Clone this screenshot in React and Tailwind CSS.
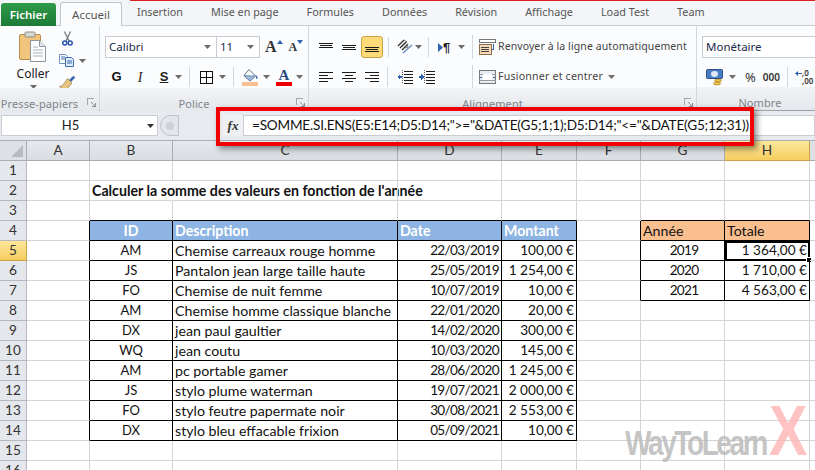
import React from "react";

const Caret = ({ c = "#6b6b6b", w = 7 }) => (
  <svg width={w} height="4" viewBox="0 0 7 4" className="shrink-0"><path d="M0 0h7L3.5 4z" fill={c} /></svg>
);

const Sep = ({ h = "h-[20px]" }) => <div className={`w-px ${h} bg-[#d4d7dc] shrink-0`} />;

const Lines = ({ rows, w = 15, h = 13 }) => (
  <svg width={w} height={h} viewBox={`0 0 ${w} ${h}`} className="shrink-0" shapeRendering="crispEdges">
    {rows.map(([a, b, y], i) => (
      <rect key={i} x={a} y={y} width={b - a} height="1" fill="#1a1a1a" />
    ))}
  </svg>
);

const Launcher = () => (
  <svg width="9" height="9" viewBox="0 0 9 9" className="shrink-0" shapeRendering="crispEdges">
    <path d="M0.5 7V0.5H7" fill="none" stroke="#a2a6ab" />
    <path d="M4 4l4 4M8 5v3H5" fill="none" stroke="#8b8f94" />
  </svg>
);

const Paste = () => (
  <svg width="28" height="31" viewBox="0 0 28 31" className="shrink-0">
    <rect x="0.5" y="3.5" width="21" height="25" rx="1.5" fill="#f2c57c" stroke="#b98d4c" />
    <rect x="6" y="1" width="10" height="5" rx="1" fill="#d8d8d2" stroke="#8d8d85" />
    <path d="M11.5 9.5h9l6 6v15h-15z" fill="#fff" stroke="#8f9499" />
    <path d="M20.5 9.5v6h6" fill="#e5e8ec" stroke="#8f9499" />
    <path d="M14 16h5M14 19h10M14 22h10M14 25h10" stroke="#a9afb6" />
  </svg>
);

const Scissors = () => (
  <svg width="11" height="15" viewBox="0 0 11 15" className="shrink-0">
    <path d="M2.5 0.5L7 10M8.5 0.5L4 10" stroke="#7a8088" strokeWidth="1.4" fill="none" />
    <circle cx="2.8" cy="12" r="2" fill="none" stroke="#2b55a8" strokeWidth="1.5" />
    <circle cx="8.2" cy="12" r="2" fill="none" stroke="#2b55a8" strokeWidth="1.5" />
  </svg>
);

const Copy = () => (
  <svg width="15" height="13" viewBox="0 0 15 13" className="shrink-0">
    <path d="M0.5 0.5h6l2 2v7h-8z" fill="#fff" stroke="#6c8fc0" />
    <path d="M6.5 3.5h6l2 2v7h-8z" fill="#dfeafa" stroke="#3f6cab" />
    <path d="M2 3h4M2 5h4M8 7h5M8 9h5" stroke="#3f6cab" />
  </svg>
);

const Brush = () => (
  <svg width="17" height="15" viewBox="0 0 17 15" className="shrink-0">
    <path d="M10 5L14.5 0.7L16.2 2.4L12 7z" fill="#3a66b0" />
    <path d="M8.5 3.5L13 8L8 14C5 14 2 13.5 0.5 11.5C3 11.5 5 9 8.5 3.5z" fill="#e5c57f" stroke="#8e7a4c" strokeWidth="0.7" />
  </svg>
);

const Fill = () => (
  <svg width="17" height="18" viewBox="0 0 17 18" className="shrink-0">
    <path d="M7 1.5L13.5 8L8 13L2 7.5z" fill="#fff" stroke="#5b6d85" />
    <path d="M2 7.5L13.5 8L8 13z" fill="#9db9dc" stroke="#4d6f9e" strokeWidth="0.6" />
    <path d="M14 7c1.5 1.6 2 3 1.2 3.8S13.6 10 14 7z" fill="#3a66b0" />
    <rect x="0" y="14" width="16" height="4" fill="#f8c090" />
  </svg>
);

const Borders = () => (
  <svg width="13" height="13" viewBox="0 0 13 13" className="shrink-0" shapeRendering="crispEdges">
    <path d="M0.5 0.5h12v12h-12zM6.5 0.5v12M0.5 6.5h12" fill="none" stroke="#111" />
  </svg>
);

const Orient = () => (
  <svg width="17" height="16" viewBox="0 0 17 16" className="shrink-0">
    <path d="M1 7L7 1M3 9L9 3M5 11L11 5" stroke="#333" strokeWidth="1.3" />
    <path d="M7 1l3 2-5 5M10 5l1 3-3 1" stroke="#777" fill="none" />
    <path d="M6 14L15 6" stroke="#5a7fb5" strokeWidth="1.2" />
  </svg>
);

const Pilcrow = () => (
  <div className="flex items-center shrink-0 w-[15px]">
    <svg width="5" height="9" viewBox="0 0 5 9"><path d="M0 0l5 4.5L0 9z" fill="#2f62ad" /></svg>
    <span className="font-['Liberation_Sans'] text-[13px] leading-none text-[#222] font-bold">¶</span>
  </div>
);

const Indent = ({ rev }) => (
  <svg width="16" height="14" viewBox="0 0 16 14" className="shrink-0" shapeRendering="crispEdges">
    <path d="M7 1h9M7 4h9M7 7h9M7 10h9M7 13h9" stroke="#1a1a1a" />
    <path d="M5.5 0v14" stroke="#555" strokeDasharray="1 1" />
    {rev ? <path d="M0 6h2V4l3 3-3 3V8H0z" fill="#2f62ad" /> : <path d="M5 6H3V4L0 7l3 3V8h2z" fill="#2f62ad" />}
  </svg>
);

const Wrap = () => (
  <svg width="17" height="16" viewBox="0 0 17 16" className="shrink-0" shapeRendering="crispEdges">
    <rect x="0.5" y="0.5" width="16" height="3" fill="#fff" stroke="#777" />
    <rect x="0.5" y="5.5" width="12" height="9.5" fill="#f7d9b7" stroke="#8a6d4e" />
    <path d="M2 8h8M2 10h8M2 12h8" stroke="#444" />
    <path d="M14.5 5v5H13" stroke="#2f62ad" fill="none" />
  </svg>
);

const Merge = () => (
  <svg width="17" height="14" viewBox="0 0 17 14" className="shrink-0" shapeRendering="crispEdges">
    <rect x="0.5" y="0.5" width="16" height="13" fill="#e8edf3" stroke="#777" />
    <path d="M0 4h17M0 10h17" stroke="#999" />
    <rect x="4" y="4" width="9" height="6" fill="#fff" />
    <path d="M1 7h2M14 7h2" stroke="#2f62ad" />
  </svg>
);

const Currency = () => (
  <svg width="17" height="17" viewBox="0 0 17 17" className="shrink-0">
    <rect x="0.5" y="0.5" width="16" height="9" rx="1" fill="#4a7cc4" stroke="#2d4f85" />
    <ellipse cx="8.5" cy="5" rx="3.5" ry="3" fill="#dfe9f7" />
    <ellipse cx="12" cy="11.5" rx="3.5" ry="1.5" fill="#f0c04a" stroke="#9a7518" strokeWidth="0.6" />
    <ellipse cx="11" cy="14.5" rx="3.5" ry="1.5" fill="#f0c04a" stroke="#9a7518" strokeWidth="0.6" />
  </svg>
);

const tabs = ["Insertion", "Mise en page", "Formules", "Données", "Révision", "Affichage", "Load Test", "Team"];

const Group = ({ className, label, launcher = true, children }) => (
  <div className={`flex flex-col h-full shrink-0 border-r border-[#d3d6da] ${className}`}>
    <div className="h-[62px] bg-[#fbfcfd] relative">{children}</div>
    <div className="h-[23px] flex justify-center pr-[20px] pt-[8px] relative bg-gradient-to-b from-[#f1f3f6] to-[#e5e8ec] text-[#7f848a] text-[11px] leading-[15px] tracking-[0.1px]">
      <span>{label}</span>
      {launcher && (
        <span className="absolute right-[3px] top-[10px]">
          <Launcher />
        </span>
      )}
    </div>
  </div>
);

const widths = [27, 63, 83, 225, 104, 75, 64, 84, 85, 6];
const letters = ["A", "B", "C", "D", "E", "F", "G", "H"];

const data = [
  ["AM", "Chemise carreaux rouge homme", "22/03/2019", "100,00 €"],
  ["JS", "Pantalon jean large taille haute", "25/05/2019", "1 254,00 €"],
  ["FO", "Chemise de nuit femme", "10/07/2019", "10,00 €"],
  ["AM", "Chemise homme classique blanche", "22/01/2020", "20,00 €"],
  ["DX", "jean paul gaultier", "14/02/2020", "300,00 €"],
  ["WQ", "jean coutu", "10/03/2020", "145,00 €"],
  ["AM", "pc portable gamer", "28/06/2020", "1 245,00 €"],
  ["JS", "stylo plume waterman", "19/07/2021", "2 000,00 €"],
  ["FO", "stylo feutre papermate noir", "30/08/2021", "2 553,00 €"],
  ["DX", "stylo bleu effacable frixion", "05/09/2021", "10,00 €"],
];
const totals = [
  ["2019", "1 364,00 €"],
  ["2020", "1 710,00 €"],
  ["2021", "4 563,00 €"],
];

function cellFor(row, col) {
  // col 1..9 = A..I
  let text = null;
  let cls = "";
  let align = "text-left";
  let rb = false, bb = false, hideR = false;
  const inMain = col >= 2 && col <= 5 && row >= 4 && row <= 14;
  const inSide = col >= 7 && col <= 8 && row >= 4 && row <= 7;
  if (inMain || inSide) { rb = true; bb = true; }
  if (row >= 4 && row <= 14 && col === 1) rb = true;
  if (row >= 4 && row <= 7 && col === 6) rb = true;
  if (row === 3 && col >= 2 && col <= 5) bb = true;
  if (row === 3 && col >= 7 && col <= 8) bb = true;
  if (row === 2 && col === 2) {
    text = "Calculer la somme des valeurs en fonction de l'année";
    cls = "font-bold text-[14.2px] text-[#111]";
    hideR = true;
  }
  if (row === 4 && inMain) {
    text = ["ID", "Description", "Date", "Montant"][col - 2];
    cls = "bg-[#8db4e2] text-white text-[14.2px] font-bold";
    align = col === 2 ? "text-center" : "text-left";
  }
  if (row === 4 && inSide) {
    text = col === 7 ? "Année" : "Totale";
    cls = "bg-[#fabf8f] text-[14.2px] text-[#111]";
  }
  if (row >= 5 && inMain) {
    text = data[row - 5][col - 2];
    align = col === 2 ? "text-center" : col === 3 ? "text-left" : "text-right";
    if (col === 3) cls = "text-[14.2px]";
    if (col === 4) cls = "tracking-[-0.65px]";
    if (col === 2) cls = "text-[13px]";
  }
  if (row >= 5 && inSide) {
    text = totals[row - 5][col - 7];
    align = col === 7 ? "text-center" : "text-right";
    if (col === 7) cls = "tracking-[-0.7px] pl-[5px]";
  }
  return { text, cls, align, rb, bb, hideR };
}

export default function App() {
  return (
    <div className="relative w-[815px] h-[470px] overflow-hidden bg-white font-['Noto_Sans',sans-serif] text-[#3b3b3b]">
      {/* Tab strip */}
      <div className="relative h-[26px] bg-[#f3f5f8] border-b border-[#c9ccd1] flex items-end">
        <div className="ml-[1px] mb-[-1px] w-[55px] h-[23px] rounded-t-[3px] bg-gradient-to-b from-[#2f9a48] to-[#1d7a37] text-white text-[11.5px] font-semibold flex items-center justify-center">
          Fichier
        </div>
        <div className="ml-[4px] mb-[-1px] w-[62px] h-[24px] rounded-t-[3px] bg-[#fbfcfd] border border-b-0 border-[#c3c6cb] text-[11.5px] text-[#555] flex items-center justify-center">
          Accueil
        </div>
        <div className="ml-[15px] h-[25px] flex items-center gap-[28px] text-[10.8px] text-[#555] whitespace-nowrap">
          {tabs.map((t) => (
            <span key={t}>{t}</span>
          ))}
        </div>
        <div className="absolute left-[130px] right-0 top-0 h-px bg-[#d92020]" />
      </div>

      {/* Ribbon */}
      <div className="flex h-[85px] border-b border-[#9ea2a7] text-[11.5px] text-[#333]">
        <Group className="w-[100px]" label="Presse-papiers">
          <div className="flex h-full">
            <div className="w-[57px] flex flex-col items-center pt-[5px] pl-[9px]">
              <Paste />
              <span className="mt-[5px] text-[12px] leading-[14px] text-[#222]">Coller</span>
              <div className="mt-[4px]"><Caret /></div>
            </div>
            <div className="flex flex-col gap-[8px] pt-[5px] pl-[2px]">
              <div className="pl-[3px]"><Scissors /></div>
              <div className="flex items-center gap-[5px]"><Copy /><Caret /></div>
              <Brush />
            </div>
          </div>
        </Group>

        <Group className="w-[209px]" label="Police">
          <div className="flex flex-col pl-[5px] pt-[10px]">
            <div className="flex items-center h-[22px]">
              <div className="w-[112px] h-[22px] bg-white border border-[#c9ccd1] flex items-center justify-between pl-[3px] pr-[5px] text-[#1b2a4a]">
                Calibri <Caret />
              </div>
              <div className="w-[43px] h-[22px] bg-white border border-l-0 border-[#c9ccd1] flex items-center justify-between pl-[3px] pr-[5px] text-[#1b2a4a]">
                11 <Caret />
              </div>
              <span className="ml-[5px] font-['Liberation_Serif'] font-bold text-[16px] text-[#333] leading-none">A</span>
              <svg width="6" height="4" viewBox="0 0 6 4" className="mb-[10px]"><path d="M0 4l3-4 3 4z" fill="#2f62ad" /></svg>
              <span className="ml-[6px] font-['Liberation_Serif'] font-bold text-[12px] text-[#333] leading-none">A</span>
              <svg width="6" height="4" viewBox="0 0 6 4" className="mb-[10px]"><path d="M0 0l3 4 3-4z" fill="#2f62ad" /></svg>
            </div>
            <div className="flex items-center h-[22px] mt-[8px]">
              <span className="ml-[4px] w-[15px] text-center font-['Liberation_Sans'] font-bold text-[13px] text-[#111]">G</span>
              <span className="ml-[11px] w-[10px] text-center font-['Liberation_Serif'] italic text-[14px] text-[#222]">I</span>
              <span className="ml-[14px] w-[10px] text-center font-['Liberation_Sans'] font-bold underline text-[13px] text-[#222]">S</span>
              <div className="ml-[6px]"><Caret /></div>
              <div className="ml-[7px]"><Sep /></div>
              <div className="ml-[10px]"><Borders /></div>
              <div className="ml-[6px]"><Caret /></div>
              <div className="ml-[7px]"><Sep /></div>
              <div className="ml-[8px]"><Fill /></div>
              <div className="ml-[4px]"><Caret /></div>
              <div className="ml-[6px] flex flex-col items-center">
                <span className="font-['Liberation_Serif'] font-bold text-[15px] leading-[13px] text-[#2a4b80]">A</span>
                <div className="w-[16px] h-[4px] bg-[#ee0000]" />
              </div>
              <div className="ml-[4px]"><Caret /></div>
            </div>
          </div>
        </Group>

        <Group className="w-[388px]" label="Alignement">
          <div className="flex flex-col pl-[10px] pt-[10px]">
            <div className="flex items-center h-[22px]">
              <Lines rows={[[0, 14, 2], [1, 13, 4], [0, 14, 6]]} />
              <div className="ml-[8px]"><Lines rows={[[0, 14, 4], [1, 13, 6], [0, 14, 8]]} /></div>
              <div className="ml-[4px] w-[22px] h-[22px] rounded-[3px] bg-[#fcdb78] border border-[#c9a24a] flex items-center justify-center">
                <Lines rows={[[0, 14, 6], [1, 13, 8], [0, 14, 10]]} />
              </div>
              <div className="ml-[5px]"><Sep /></div>
              <div className="ml-[8px]"><Orient /></div>
              <div className="ml-[1px]"><Caret /></div>
              <div className="ml-[6px]"><Sep /></div>
              <div className="ml-[9px]"><Pilcrow /></div>
              <div className="ml-[5px]"><Caret /></div>
              <div className="ml-[7px]"><Sep h="h-[24px]" /></div>
              <div className="ml-[6px]"><Wrap /></div>
              <span className="ml-[2px] text-[10.5px] tracking-[0.1px] text-[#444] whitespace-nowrap">Renvoyer à la ligne automatiquement</span>
            </div>
            <div className="flex items-center h-[22px] mt-[8px]">
              <Lines rows={[[0, 14, 1], [0, 9, 4], [0, 14, 7], [0, 9, 10]]} />
              <div className="ml-[8px]"><Lines rows={[[0, 14, 1], [3, 11, 4], [0, 14, 7], [3, 11, 10]]} /></div>
              <div className="ml-[8px]"><Lines rows={[[0, 14, 1], [5, 14, 4], [0, 14, 7], [5, 14, 10]]} /></div>
              <div className="ml-[7px]"><Sep /></div>
              <div className="ml-[9px]"><Indent /></div>
              <div className="ml-[6px]"><Indent rev /></div>
              <div className="ml-[37px]"><Sep h="h-[24px]" /></div>
              <div className="ml-[6px]"><Merge /></div>
              <span className="ml-[2px] text-[10.6px] tracking-[0.2px] text-[#444] whitespace-nowrap">Fusionner et centrer</span>
              <div className="ml-[5px]"><Caret /></div>
            </div>
          </div>
        </Group>

        <div className="flex flex-col h-full flex-1 min-w-0">
          <div className="h-[62px] bg-[#fbfcfd] pl-[5px] pt-[10px] overflow-hidden">
            <div className="h-[22px] w-[130px] bg-white border border-[#c9ccd1] flex items-center pl-[3px] text-[#1b2a4a]">Monétaire</div>
            <div className="flex items-center h-[22px] mt-[8px]">
              <div className="ml-[4px]"><Currency /></div>
              <div className="ml-[6px]"><Caret /></div>
              <span className="ml-[9px] text-[13px] text-[#333] leading-none">%</span>
              <span className="ml-[7px] text-[10px] text-[#333] leading-none font-semibold">000</span>
              <div className="ml-[7px]"><Sep /></div>
              <svg width="7" height="5" viewBox="0 0 7 5" className="ml-[7px] mb-[8px] shrink-0"><path d="M0 2.5L3 0v2h4v1H3v2z" fill="#2f62ad" /></svg>
              <div className="flex flex-col text-[8px] leading-[8px] text-[#333] font-semibold whitespace-nowrap">
                <span>,0</span>
                <span>,00</span>
              </div>
            </div>
          </div>
          <div className="h-[23px] flex justify-center pl-[8px] pt-[8px] bg-gradient-to-b from-[#f1f3f6] to-[#e5e8ec] text-[#7f848a] text-[11px] leading-[15px] tracking-[0.1px]">
            <span>Nombre</span>
          </div>
        </div>
      </div>

      {/* Formula bar */}
      <div className="h-[30px] bg-[#e7eaee] border-b border-[#a9adb2] pt-[4px] flex items-start text-[#222]">
        <div className="ml-[1px] w-[157px] h-[21px] bg-white border border-[#c9ccd1] flex items-center text-[13px]">
          <span className="flex-1 text-center pr-[8px] font-['Lato'] text-[#222]">H5</span>
          <div className="mr-[3px]"><Caret c="#333" /></div>
        </div>
        <div className="w-[19px] h-[21px] rounded-l-full ml-[2px] bg-[#e2e5e9] border border-[#bfc3c8] flex items-center justify-center">
          <div className="w-[8px] h-[8px] rounded-full bg-[#cdd0d4]" />
        </div>
        <div className="ml-[44px] w-[20px] h-[21px] flex items-center justify-center font-['Liberation_Serif'] italic font-bold text-[13px] text-[#333] bg-[#eef0f3]">
          fx
        </div>
        <div className="flex-1 h-[21px] bg-white border border-[#c9ccd1] pl-[8px] flex items-center font-['Lato'] text-[13.6px] tracking-[-0.21px] text-[#111] whitespace-nowrap">
          =SOMME.SI.ENS(E5:E14;D5:D14;"&gt;="&amp;DATE(G5;1;1);D5:D14;"&lt;="&amp;DATE(G5;12;31))
        </div>
      </div>

      {/* Column headers */}
      <div className="flex h-[20px] font-['Lato'] text-[13.6px] text-[#333]">
        <div style={{ width: widths[0] }} className="shrink-0 bg-[#dde1e6] border-r border-b border-[#a9adb2] relative">
          <svg width="12" height="12" viewBox="0 0 12 12" className="absolute right-[3px] bottom-[3px]"><path d="M12 0v12H0z" fill="#b7bbc0" /></svg>
        </div>
        {letters.map((l, i) => (
          <div
            key={l}
            style={{ width: widths[i + 1] }}
            className={`shrink-0 flex items-center justify-center border-r border-b ${l === "H" ? "bg-gradient-to-b from-[#fbe79a] to-[#f6cd5e] border-[#c9a24a]" : "bg-gradient-to-b from-[#e6e9ed] to-[#d9dde2] border-[#a9adb2]"}`}
          >
            {l}
          </div>
        ))}
        <div className="flex-1 bg-[#dde1e6] border-b border-[#a9adb2]" />
      </div>

      {/* Sheet grid */}
      <div className="font-['Lato'] text-[13.6px] text-[#111]">
        {Array.from({ length: 16 }, (_, r) => r + 1).map((row) => (
          <div key={row} className="flex h-[20px]">
            <div
              style={{ width: widths[0] }}
              className={`shrink-0 flex items-center justify-center text-[#333] border-r border-b ${row === 5 ? "bg-gradient-to-b from-[#fbe79a] to-[#f6cd5e] border-[#c9a24a]" : "bg-[#e4e7eb] border-[#b5b9be]"}`}
            >
              {row}
            </div>
            {widths.slice(1).map((w, ci) => {
              const col = ci + 1;
              const c = cellFor(row, col);
              const isH5 = row === 5 && col === 8;
              return (
                <div
                  key={col}
                  style={{ width: w }}
                  className={`relative shrink-0 h-full border-r border-b flex items-center px-[2px] ${c.hideR ? "border-r-transparent" : c.rb ? "border-r-black" : "border-r-[#d4d4d4]"} ${c.bb ? "border-b-black" : "border-b-[#d4d4d4]"} ${c.cls}`}
                >
                  {c.text && <span className={`w-full ${c.align} whitespace-nowrap`}>{c.text}</span>}
                  {isH5 && (
                    <>
                      <span className="absolute left-0 top-0 right-[-1px] bottom-[-1px] border-2 border-black" />
                      <span className="absolute right-[-3px] bottom-[-3px] w-[6px] h-[6px] bg-black border border-white" />
                    </>
                  )}
                </div>
              );
            })}
          </div>
        ))}
      </div>

      {/* Red callout */}
      <div className="absolute left-[216px] top-[107px] w-[538px] h-[39px] border-[4px] border-[#f00000] shadow-[3px_3px_6px_rgba(0,0,0,0.45)]" />

      {/* Watermark */}
      <div className="absolute left-[625px] top-[404px] h-[60px] w-[190px] pointer-events-none font-['Liberation_Sans']">
        <span className="absolute left-0 top-[20px] origin-left scale-x-[0.8] text-[35px] leading-[38px] font-bold tracking-[-3px] text-[#bdbdbd]/90 whitespace-nowrap">
          WayToLearn
        </span>
        <span className="absolute left-[144px] top-[-8px] origin-left scale-x-[0.82] text-[70px] leading-[70px] font-bold text-[#ffb4b4]/80">X</span>
      </div>
    </div>
  );
}
